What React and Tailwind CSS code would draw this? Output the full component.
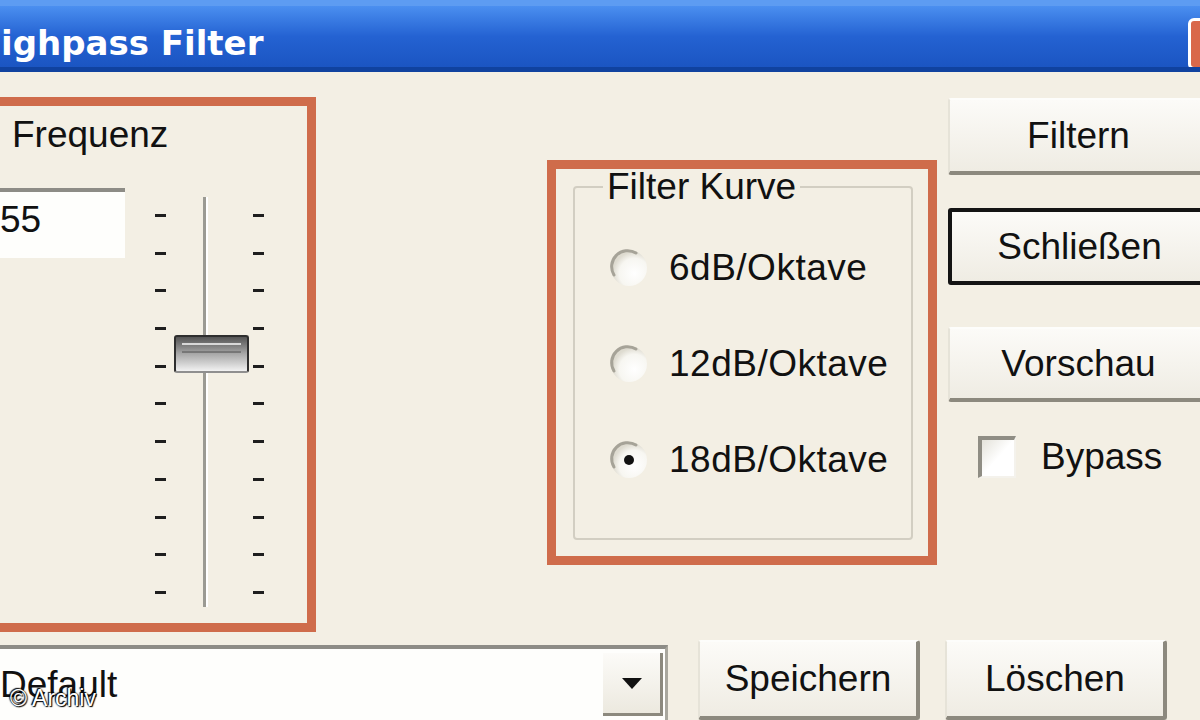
import React from 'react';

const font = { fontFamily: '"Liberation Sans", Arial, sans-serif' };

const btn =
  'flex items-center justify-center text-[37px] text-[#111] bg-gradient-to-b from-[#fcfbf8] to-[#efece3] border-t-2 border-l-2 border-t-[#fdfdfb] border-l-[#e6e3d8] border-b-[4px] border-r-[4px] border-b-[#8c897e] border-r-[#8c897e] rounded-[3px]';

const Radio = ({ checked }) => (
  <svg width="40" height="40" viewBox="0 0 40 40" className="shrink-0">
    <defs>
      <radialGradient id={checked ? 'rg1' : 'rg0'} cx="65%" cy="65%" r="60%">
        <stop offset="0%" stopColor="#ffffff" />
        <stop offset="70%" stopColor="#f7f6f1" />
        <stop offset="100%" stopColor="#dedbd0" />
      </radialGradient>
    </defs>
    <circle cx="20" cy="20" r="18" fill={`url(#${checked ? 'rg1' : 'rg0'})`} />
    <path d="M5 27 A16 16 0 0 1 27 5" fill="none" stroke="#a6a398" strokeWidth="3" strokeLinecap="round" />
    {checked && <circle cx="20" cy="20" r="5" fill="#111" />}
  </svg>
);

const Ticks = () => (
  <div className="flex flex-col justify-between h-[380px] mt-[26px]">
    {Array.from({ length: 11 }).map((_, i) => (
      <div key={i} className="w-[11px] h-[3px] bg-[#1e1e1e]" />
    ))}
  </div>
);

export default function App() {
  return (
    <div
      className="relative w-[1200px] h-[720px] overflow-hidden bg-[#f3efe4] flex flex-col"
      style={font}
    >
      {/* Title bar */}
      <div className="h-[72px] shrink-0 flex justify-between bg-gradient-to-b from-[#4b8ff0] via-[#2462d2] to-[#1b55c2] border-t-[6px] border-t-[#5d9cf2] border-b-[5px] border-b-[#10429f] overflow-hidden">
        <div
          className="mt-[17px] ml-[1px] text-[34px] leading-[40px] font-bold text-white"
          style={{ fontFamily: '"DejaVu Sans", Verdana, sans-serif' }}
        >
          ighpass Filter
        </div>
        <div className="mt-[12px] mr-[-32px] w-[44px] h-[52px] rounded-[6px] border-[3px] border-white bg-[#d9684a]" />
      </div>

      {/* Main area */}
      <div className="h-[560px] shrink-0 flex items-start">
        {/* Frequenz box */}
        <div className="ml-[-20px] mt-[25px] w-[336px] h-[535px] shrink-0 border-[9px] border-[#cf6c4b]">
          <div className="ml-[23px] mt-[9px] h-[40px] leading-[40px] text-[37px] text-[#111]">
            Frequenz
          </div>
          <div className="mt-[33px] flex items-start">
            <div className="w-[136px] h-[70px] bg-[#fefefc] border-t-[4px] border-t-[#8d8c86] pt-[8px] pl-[11px] text-[37px] leading-[40px] text-[#111]">
              55
            </div>
            <div className="ml-[20px] h-[430px] flex">
              <div className="ml-[10px]">
                <Ticks />
              </div>
              <div className="relative w-[87px] h-[430px]">
                <div className="absolute left-[37px] top-[9px] w-[3px] h-[410px] bg-[#9b9a93]" />
                <div className="absolute left-[40px] top-[9px] w-[2px] h-[410px] bg-white" />
                <div className="absolute left-[8px] top-[147px] w-[75px] h-[38px] rounded-[3px] border-2 border-[#2e2e2e] border-b-[#8f8f8f] bg-gradient-to-b from-[#555555] via-[#a9a9a9] to-[#f2f2f2]">
                  <div className="mx-[6px] mt-[6px] h-[2px] bg-[#d8d8d8]" />
                  <div className="mx-[6px] mt-[6px] h-[2px] bg-[#777777]" />
                </div>
              </div>
              <Ticks />
            </div>
          </div>
        </div>

        {/* Filter Kurve box */}
        <div className="ml-[231px] mt-[88px] w-[390px] h-[405px] shrink-0 border-[9px] border-[#cf6c4b]">
          <fieldset className="ml-[17px] mt-[3px] w-[340px] h-[368px] border-2 border-[#d2cec2] rounded-[4px]">
            <legend className="ml-[28px] px-[4px] text-[37px] leading-[30px] text-[#111]">
              Filter Kurve
            </legend>
            <div className="flex flex-col gap-[36px] pt-[36px] pl-[34px]">
              {[
                ['6dB/Oktave', false],
                ['12dB/Oktave', false],
                ['18dB/Oktave', true],
              ].map(([label, checked]) => (
                <div key={label} className="h-[60px] flex items-center gap-[20px]">
                  <Radio checked={checked} />
                  <span className="text-[37px] leading-[40px] tracking-[0.5px] text-[#111]">{label}</span>
                </div>
              ))}
            </div>
          </fieldset>
        </div>

        {/* Right buttons */}
        <div className="ml-[11px] mt-[26px] w-[263px] shrink-0 flex flex-col">
          <div className={`${btn} h-[77px]`}>Filtern</div>
          <div className="mt-[33px] h-[77px] flex items-center justify-center text-[37px] text-[#111] bg-gradient-to-b from-[#fcfbf8] to-[#efece3] border-[4px] border-[#141414] rounded-[3px]">
            Schließen
          </div>
          <div className={`${btn} mt-[42px] h-[75px]`}>Vorschau</div>
          <div className="mt-[34px] ml-[30px] flex items-center">
            <div className="w-[38px] h-[42px] bg-gradient-to-br from-[#e4e2da] via-white to-white border-t-[4px] border-l-[4px] border-[#8f8d84] border-r-2 border-b-2 border-r-[#f4f2ec] border-b-[#f4f2ec]" />
            <span className="ml-[25px] text-[37px] leading-[40px] text-[#111]">Bypass</span>
          </div>
        </div>
      </div>

      {/* Bottom row */}
      <div className="flex items-start">
        <div className="ml-[-10px] mt-[13px] w-[678px] h-[75px] shrink-0 flex items-center bg-[#fefefc] border-t-[4px] border-t-[#8d8c86] border-r-[3px] border-r-[#a9a79e]">
          <span className="flex-1 pl-[10px] text-[37px] leading-[40px] text-[#111]">Default</span>
          <div className="mr-[2px] w-[60px] h-[63px] flex items-center justify-center bg-gradient-to-b from-[#fcfbf8] to-[#ece9df] border-r-[3px] border-b-[3px] border-r-[#8c897e] border-b-[#8c897e]">
            <svg width="22" height="14" viewBox="0 0 22 14">
              <path d="M1 2 H21 L11 13 Z" fill="#111" />
            </svg>
          </div>
        </div>
        <div className={`${btn} ml-[30px] mt-[8px] w-[222px] h-[80px] shrink-0`}>Speichern</div>
        <div className={`${btn} ml-[25px] mt-[8px] w-[222px] h-[80px] shrink-0`}>Löschen</div>
      </div>

      {/* Watermark */}
      <div
        className="absolute left-[10px] top-[685px] text-[23px] leading-[26px] text-white"
        style={{ textShadow: '0 0 2px #000, 1px 1px 1px #000, -1px -1px 1px #000' }}
      >
        © Archiv
      </div>
    </div>
  );
}
